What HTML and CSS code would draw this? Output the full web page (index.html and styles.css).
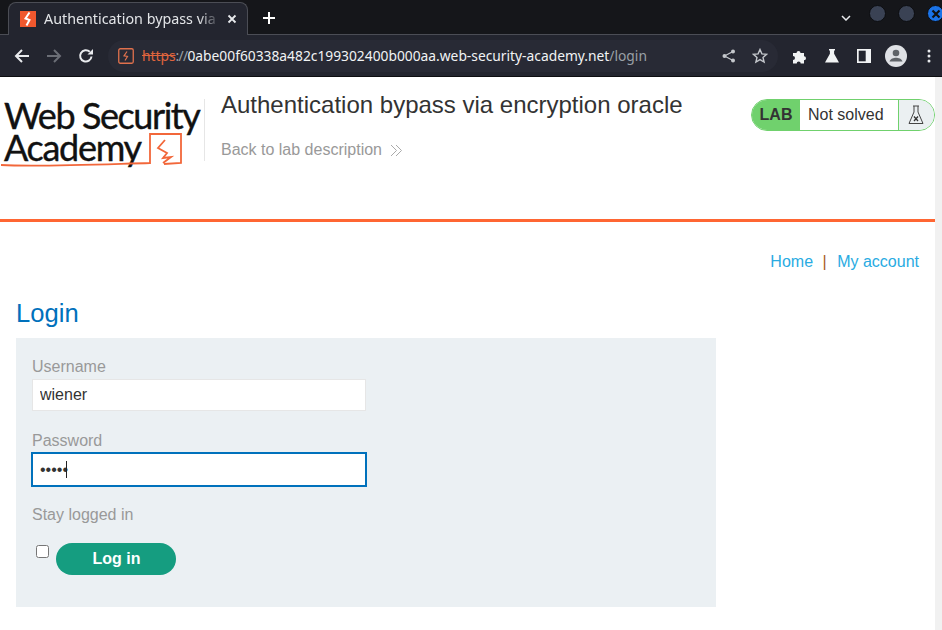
FILE: index.html
```html
<!DOCTYPE html>
<html lang="en">
<head>
<meta charset="utf-8">
<title>Authentication bypass via encryption oracle</title>
<link rel="stylesheet" href="styles.css">
</head>
<body>
<div class="browser">
  <div class="tabstrip">
    <div class="tab">
      <svg class="favicon" viewBox="0 0 16 16"><rect width="16" height="16" fill="#f0582e"/><path d="M9.500 1.500 5.500 7.500 9.500 9 6.500 14.500" fill="none" stroke="#fff" stroke-width="2"/></svg>
      <span class="tab-title">Authentication bypass via encryption oracle</span>
      <svg class="tab-close" viewBox="0 0 10 10"><path d="M1.500 1.500l7 7M8.500 1.500l-7 7" stroke="#e8eaed" stroke-width="1.800"/></svg>
    </div>
    <svg class="new-tab" viewBox="0 0 12 12"><path d="M6 0v12M0 6h12" stroke="#fff" stroke-width="2"/></svg>
    <div class="strip-end">
      <svg class="chevron" viewBox="0 0 10 6"><path d="M1 1l4 4 4-4" fill="none" stroke="#e8eaed" stroke-width="1.500"/></svg>
      <span class="win-btn"></span>
      <span class="win-btn"></span>
      <span class="win-btn win-close"><svg viewBox="0 0 10 10"><path d="M1.500 1.500l7 7M8.500 1.500l-7 7" stroke="#111" stroke-width="2.200"/></svg></span>
    </div>
  </div>
  <div class="toolbar">
    <svg class="tool nav-first" viewBox="0 0 16 16"><path d="M15 8H2M8 2 2 8l6 6" fill="none" stroke="#e8eaed" stroke-width="2"/></svg>
    <svg class="tool" viewBox="0 0 16 16"><path d="M1 8h13M8 2l6 6-6 6" fill="none" stroke="#6b6e76" stroke-width="2"/></svg>
    <svg class="tool" viewBox="0 0 16 16"><path d="M13.500 8.500A5.700 5.700 0 1 1 11.800 3.800" fill="none" stroke="#e8eaed" stroke-width="2"/><path d="M9.500 6.500H15V1z" fill="#e8eaed"/></svg>
    <div class="omnibox">
      <svg class="site-icon" viewBox="0 0 16 16"><rect x=".75" y=".75" width="14.500" height="14.500" rx="1.500" fill="none" stroke="#e0714d" stroke-width="1.300"/><path d="M9 3.500 6 7.800 9.500 8.500 7 12.500" fill="none" stroke="#e0714d" stroke-width="1.200"/></svg>
      <span class="url"><span class="scheme">https</span><span class="dim slashes">://</span>0abe00f60338a482c199302400b000aa.web-security-academy.net<span class="dim">/login</span></span>
      <svg class="omni-icon share" viewBox="0 0 14 14"><circle cx="11" cy="2.500" r="2" fill="#c4c7cc"/><circle cx="11" cy="11.500" r="2" fill="#c4c7cc"/><circle cx="2.500" cy="7" r="2" fill="#c4c7cc"/><path d="M11 2.500 2.500 7l8.500 4.500" fill="none" stroke="#c4c7cc" stroke-width="1.200"/></svg>
      <svg class="omni-icon star" viewBox="0 0 16 16"><path d="M8 1.500l1.900 4.400 4.700.4-3.600 3.100 1.100 4.600L8 11.600l-4.100 2.400L5 9.400 1.400 6.300l4.700-.4z" fill="none" stroke="#c4c7cc" stroke-width="1.400"/></svg>
    </div>
    <svg class="ext puzzle" viewBox="0 0 16 16"><path d="M1 5h3.500a2 2 0 1 1 4 0H12v3.300a2 2 0 1 1 0 4V15.500H8.700a2 2 0 1 0-4 0H1v-3.500a2 2 0 1 0 0-4z" fill="#f1f3f4"/></svg>
    <svg class="ext flask" viewBox="0 0 16 16"><path d="M5 1h6v1.500h-.9v3.300L15 14.500H1l4.900-8.700V2.500H5z" fill="#f1f3f4"/></svg>
    <svg class="ext panel" viewBox="0 0 14 14"><rect width="14" height="14" fill="#f1f3f4"/><rect x="1.700" y="1.700" width="7" height="10.600" fill="#23252f"/></svg>
    <svg class="avatar" viewBox="0 0 22 22"><circle cx="11" cy="11" r="11" fill="#dfe1e5"/><circle cx="11" cy="8" r="3.300" fill="#5f6368"/><path d="M4.500 16.500c1-3 4-3.800 6.500-3.800s5.500.8 6.500 3.800z" fill="#5f6368"/></svg>
    <svg class="kebab" viewBox="0 0 4 14"><circle cx="2" cy="2" r="1.500" fill="#e8eaed"/><circle cx="2" cy="7" r="1.500" fill="#e8eaed"/><circle cx="2" cy="12" r="1.500" fill="#e8eaed"/></svg>
  </div>
</div>
<div class="viewport">
  <div class="page">
    <header class="lab-header">
      <div class="logo">
        <div class="logo-line">Web Security</div>
        <div class="logo-line logo-second">Academy</div>
        <svg class="logo-mark" viewBox="0 0 182 36"><path d="M1 33C40 35 110 32 150 31L150 2 181 2 181 31 164 32" fill="none" stroke="#f2673a" stroke-width="1.800"/><path d="M165 8 158 16 167 21 163 26 171 25 163 31" fill="none" stroke="#f2673a" stroke-width="1.800"/></svg>
      </div>
      <div class="lab-info">
        <h2 class="lab-title">Authentication bypass via encryption oracle</h2>
        <a class="back-link">Back to lab description
          <svg class="chevrons" viewBox="0 0 13 13"><path d="M1 1l5.500 5.500L1 12M6 1l5.500 5.500L6 12" fill="none" stroke="#aaa" stroke-width="1"/></svg>
        </a>
      </div>
      <div class="lab-status">
        <span class="lab-tag">LAB</span>
        <span class="lab-state">Not solved</span>
        <span class="lab-icon"><svg viewBox="0 0 16 20"><path d="M5 1h6M6 1v6L1 18.500h14L10 7V1" fill="none" stroke="#444" stroke-width="1"/><path d="M6 11.500l4 4.500M10 11.500l-4 4.500" stroke="#333" stroke-width="1.300"/></svg></span>
      </div>
    </header>
    <nav class="top-links"><a>Home</a><span class="sep">|</span><a>My account</a></nav>
    <main class="content">
      <h1 class="page-title">Login</h1>
      <form class="login-form">
        <label class="field-label" for="u">Username</label>
        <input class="text-input" id="u" type="text" value="wiener">
        <label class="field-label pw-label" for="p">Password</label>
        <div class="pw-wrap">
          <input class="text-input focused" id="p" type="password" value="peter">
          <span class="caret"></span>
        </div>
        <label class="field-label stay-label" for="s">Stay logged in</label>
        <div class="submit-row">
          <input class="check" id="s" type="checkbox">
          <button class="login-btn" type="button">Log in</button>
        </div>
      </form>
    </main>
  </div>
  <div class="scrollbar"></div>
</div>
</body>
</html>
```
FILE: styles.css
```css
* { box-sizing: border-box; }
html, body { margin: 0; height: 100%; overflow: hidden; }
body { font-family: "Liberation Sans", Arial, sans-serif; font-size: 16px; background: #fff; color: #333; display: flex; flex-direction: column; }

.browser { flex: none; height: 77px; background: #23252f; border-bottom: 1px solid #0d0e11; font-family: "Noto Sans", sans-serif; }
.tabstrip { height: 35px; background: #15161a; display: flex; align-items: flex-end; padding-left: 8px; border-bottom: 1px solid #4b4d55; position: relative; }
.tab { width: 240px; height: 33px; margin-bottom: -1px; background: #23252f; border: 1px solid #4b4d55; border-bottom: 0; border-radius: 8px 8px 0 0; display: flex; align-items: center; padding-left: 11px; }
.favicon { width: 16px; height: 16px; flex: none; }
.tab-title { width: 176px; margin: -2px 0 0 8px; font-size: 14.300px; color: #e3e5e8; white-space: nowrap; overflow: hidden; -webkit-mask-image: linear-gradient(90deg, #000 88%, transparent); mask-image: linear-gradient(90deg, #000 88%, transparent); }
.tab-close { width: 10px; height: 10px; margin-left: 7px; flex: none; }
.new-tab { width: 12px; height: 12px; margin: 0 0 10px 15px; flex: none; }
.strip-end { margin-left: auto; display: flex; align-items: flex-start; height: 34px; padding-top: 5px; }
.chevron { width: 10px; height: 6px; margin: 10px 18px 0 0; }
.win-btn { width: 17px; height: 17px; border-radius: 50%; background: #3a4254; margin-right: 12px; border: 1px solid #0c0d10; }
.win-close { width: 17px; margin-right: -2px; background: #1a73e8; display: flex; align-items: center; justify-content: center; }
.win-close svg { width: 10px; height: 10px; }

.toolbar { height: 41px; display: flex; align-items: center; }
.tool { width: 16px; height: 16px; flex: none; margin-left: 16px; }
.nav-first { margin-left: 14px; }
.omnibox { width: 670px; height: 32px; margin-left: 14px; border-radius: 16px; background: #282a35; display: flex; align-items: center; padding-left: 10px; flex: none; }
.site-icon { width: 16px; height: 16px; flex: none; }
.url { font-size: 13.800px; color: #f1f3f4; margin-left: 8px; white-space: nowrap; width: 504px; flex: none; }
.scheme { color: #e0653d; text-decoration: line-through; }
.dim { color: #9aa0a6; }
.slashes { letter-spacing: -0.700px; }
.omni-icon { flex: none; }
.share { width: 14px; height: 14px; margin-left: 76px; }
.star { width: 16px; height: 16px; margin-left: 16px; }
.ext { flex: none; }
.puzzle { width: 16px; height: 16px; margin-left: 14px; }
.flask { width: 16px; height: 16px; margin-left: 16px; }
.panel { width: 14px; height: 14px; margin-left: 17px; }
.avatar { width: 22px; height: 22px; margin-left: 14px; flex: none; }
.kebab { width: 4px; height: 14px; margin-left: 20px; flex: none; }

.viewport { flex: 1; display: flex; min-height: 0; }
.page { flex: 1; min-width: 0; }
.scrollbar { width: 7px; background: #f1f1f1; flex: none; }

.lab-header { height: 145px; border-bottom: 3px solid #ff6633; display: flex; align-items: flex-start; padding-top: 22px; position: relative; }
.logo { width: 205px; height: 62px; padding-left: 4px; border-right: 1px solid #e6e6e6; flex: none; font-family: "Lato", sans-serif; color: #111; font-size: 36px; line-height: 32px; position: relative; -webkit-text-stroke: 0.4px #111; }
.logo-line { white-space: nowrap; letter-spacing: -1.420px; }
.logo-second { letter-spacing: -1.300px; }
.logo-mark { position: absolute; left: 0; top: 33px; width: 182px; height: 36px; }
.lab-info { margin-left: 16px; flex: none; }
.lab-title { margin: -9px 0 0; font-size: 24px; font-weight: 400; line-height: 30px; color: #333; }
.back-link { display: flex; align-items: center; gap: 8px; margin-top: 21px; color: #999; line-height: 18px; }
.chevrons { width: 13px; height: 13px; }
.lab-status { position: absolute; right: 0; top: 22px; width: 184px; height: 32px; border: 1px solid #70d16d; border-radius: 16px; display: flex; overflow: hidden; background: #fff; }
.lab-tag { width: 48px; background: #70d16d; font-weight: 700; color: #333; display: flex; align-items: center; justify-content: center; }
.lab-state { width: 99px; padding-left: 8px; line-height: 30px; color: #333; border-right: 1px solid #70d16d; }
.lab-icon { flex: 1; background: #ebf0f2; display: flex; align-items: center; justify-content: center; padding-right: 2px; }
.lab-icon svg { width: 16px; height: 20px; }

.top-links { display: flex; justify-content: flex-end; padding: 31px 16px 0 0; line-height: 18px; color: #29abe2; }
.sep { color: #a85b1b; margin: 0 10.500px 0 9.500px; }
.content { padding: 0 16px; }
.page-title { margin: 26px 0 0; font-size: 25.600px; font-weight: 400; line-height: 32px; color: #0071bc; }
.login-form { width: 700px; height: 269px; margin-top: 9px; background: #ebf0f3; padding: 20px 16px 0; display: flex; flex-direction: column; align-items: flex-start; }
.field-label { color: #999; line-height: 18px; }
.text-input { display: block; width: 334px; height: 32px; margin-top: 3px; padding: 0 7px; border: 1px solid #e6e6e6; background: #fff; font: 16px "Liberation Sans", Arial, sans-serif; color: #333; outline: 0; }
.pw-label { margin-top: 21px; }
.pw-wrap { position: relative; margin: 2px 0 0 -1px; }
.focused { width: 336px; height: 35px; margin-top: 0; border: 2px solid #0071bc; }
.caret { position: absolute; left: 35px; top: 9px; width: 1px; height: 17px; background: #222; }
.stay-label { margin-top: 19px; }
.submit-row { display: flex; align-items: flex-start; margin-top: 19px; }
.check { width: 13px; height: 13px; margin: 2px 7px 0 4px; }
.login-btn { width: 120px; height: 32px; border: 0; border-radius: 16px; background: #159d80; color: #fff; font: 700 16px "Liberation Sans", Arial, sans-serif; padding: 0 0 0 1px; }
```
